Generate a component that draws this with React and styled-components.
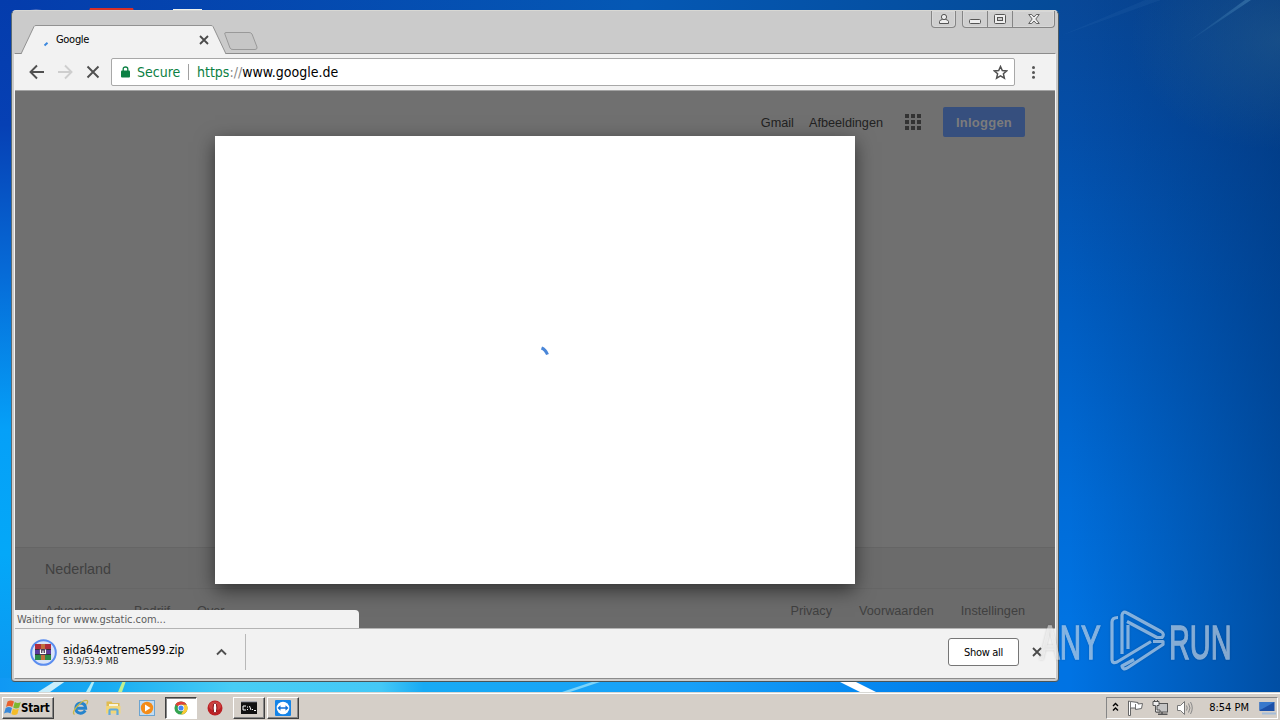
import React from "react";
import styled, { createGlobalStyle, css } from "styled-components";

const UI = '"DejaVu Sans Condensed", "DejaVu Sans", sans-serif';

const GlobalStyle = createGlobalStyle`
  * { box-sizing: border-box; }
  body { margin: 0; overflow: hidden; }
  svg { display: block; flex: none; }
`;

const Desktop = styled.div`
  position: relative;
  width: 1280px;
  height: 720px;
  display: flex;
  flex-direction: column;
  overflow: hidden;
  font-family: ${UI};
  font-stretch: condensed;
  background:
    linear-gradient(90deg, rgba(0, 50, 112, 0) 1070px, rgba(0, 47, 110, 0.54) 1280px),
    linear-gradient(180deg, #084898 0, #044ea8 130px, #005cc0 300px, #006cd8 500px, #0073e2 620px, #0073e4 720px);
`;

const Wallpaper = styled.svg`
  position: absolute;
  inset: 0;
`;

const Stage = styled.div`
  position: relative;
  height: 692px;
  padding: 10px 0 0 11px;
`;

const Window = styled.div`
  width: 1048px;
  height: 672px;
  display: flex;
  flex-direction: column;
  background: #cbcbcb;
  border: 1px solid;
  border-color: #d8d8d4 #4c5a62 #4a5558 #5b6c74;
  border-radius: 5px 5px 4px 4px;
`;

const TitleBar = styled.div`
  display: flex;
  align-items: flex-end;
  height: 42px;
  padding-left: 9px;
  position: relative;
`;

const Tab = styled.div`
  position: relative;
  width: 206px;
  height: 29px;
  margin-bottom: -1px;
  display: flex;
  align-items: center;
  padding: 0 18px 0 22px;
  z-index: 1;
`;

const TabShape = styled.svg`
  position: absolute;
  inset: 0;
`;

const TabTitle = styled.span`
  position: relative;
  flex: 1;
  margin-left: 7px;
  font-size: 11px;
  letter-spacing: -0.3px;
  color: #000;
`;

const Over = styled.span`
  position: relative;
  display: flex;
  padding-top: ${(p) => p.$drop || 0}px;
`;

const NewTab = styled.svg`
  margin: 0 0 2px -5px;
`;

const Caption = styled.div`
  display: flex;
  gap: 6px;
  position: absolute;
  right: 3px;
  top: 0;
`;

const CaptionGroup = styled.div`
  display: flex;
  height: 17px;
  border: 1px solid #858585;
  border-top: 0;
  border-radius: 0 0 4px 4px;
  background: #cfcfcf;
  box-shadow: inset 0 0 0 1px #d8d8d8;
`;

const CaptionButton = styled.div`
  width: ${(p) => p.$w}px;
  display: flex;
  align-items: center;
  justify-content: center;
  & + & { border-left: 1px solid #858585; }
`;

const Client = styled.div`
  margin: 0 2px 0 2px;
  flex: none;
  height: 626px;
  display: flex;
  flex-direction: column;
  background: #f2f2f2;
  border: 1px solid #8c8c8c;
  border-left-color: #f4f4f4;
  border-right-color: #f4f4f4;
`;

const Toolbar = styled.div`
  height: 37px;
  flex: none;
  display: flex;
  align-items: center;
  padding: 0 0 0 14px;
  border-bottom: 1px solid #a3a3a3;
  gap: 12px;
`;

const Omnibox = styled.div`
  width: 904px;
  height: 28px;
  margin-left: -2px;
  border: 1px solid #a8a8a8;
  border-radius: 2px;
  background: #fff;
  display: flex;
  align-items: center;
  padding: 0 6px 0 9px;
  font-size: 14px;
  color: #000;
`;

const Secure = styled.span`
  margin-left: 7px;
  border-right: 1px solid #a0a0a0;
  height: 16px;
  line-height: 17px;
  color: #0b8043;
  width: 52px;
  white-space: nowrap;
`;

const Url = styled.span`
  flex: 1;
  margin-left: 8px;
  i { font-style: normal; color: #0b8043; }
  b { font-weight: normal; color: #888; }
`;

const Page = styled.div`
  height: 537px;
  flex: none;
  position: relative;
  background: #707070;
  display: flex;
  flex-direction: column;
  justify-content: space-between;
  font-family: "Liberation Sans", Arial, sans-serif;
  font-size: 13px;
  overflow: hidden;
`;

const PageNav = styled.div`
  display: flex;
  align-items: center;
  justify-content: flex-end;
  height: 62px;
  padding-right: 30px;
  color: #222;
`;

const NavLink = styled.span`
  margin-right: ${(p) => p.$gap || 15}px;
  padding-top: 2px;
  font-size: 12.7px;
`;

const SignIn = styled.div`
  margin-left: 22px;
  width: 82px;
  height: 30px;
  border-radius: 2px;
  background: #364f7e;
  color: #7c7c7c;
  font-weight: bold;
  letter-spacing: 0.25px;
  text-align: center;
  line-height: 31px;
`;

const PageFooter = styled.div`
  height: 81px;
  background: #6b6b6b;
  border-top: 1px solid #656565;
  color: #404040;
`;

const Country = styled.div`
  height: 41px;
  padding: 0 30px;
  line-height: 43px;
  font-size: 14.3px;
  border-bottom: 1px solid #666;
`;

const FooterLinks = styled.div`
  display: flex;
  justify-content: space-between;
  padding: 15px 30px 0;
  line-height: 15px;
  font-size: 12.7px;
`;

const LinkGroup = styled.div`
  display: flex;
  gap: 27px;
`;

const Modal = styled.div`
  position: absolute;
  left: 200px;
  top: 45px;
  width: 640px;
  height: 448px;
  background: #fff;
  box-shadow: 0 6px 18px rgba(0, 0, 0, 0.55);
  display: flex;
  align-items: center;
  justify-content: center;
  padding: 0 0 17px 20px;
`;

const StatusBubble = styled.div`
  position: absolute;
  left: -1px;
  bottom: 0;
  width: 345px;
  height: 18px;
  background: #f2f2f2;
  border-radius: 0 4px 0 0;
  padding-left: 3px;
  font-family: ${UI};
  font-stretch: condensed;
  font-size: 11px;
  letter-spacing: -0.06px;
  line-height: 19px;
  color: #5c5c5c;
`;

const Shelf = styled.div`
  flex: 1;
  border-top: 1px solid #b4b4b4;
  display: flex;
  align-items: center;
  padding: 0 13px 3px 15px;
`;

const DownloadItem = styled.div`
  width: 216px;
  height: 36px;
  border-right: 1px solid #b8b8b8;
  display: flex;
  align-items: center;
  padding-right: 18px;
`;

const FileText = styled.div`
  flex: 1;
  margin-left: 6px;
  padding-top: 5px;
  font-size: 12px;
  line-height: 13px;
  color: #000;
`;

const FileSize = styled.div`
  font-size: 9px;
  line-height: 8px;
  letter-spacing: 0.15px;
  color: #222;
`;

const ShowAll = styled.div`
  margin-left: auto;
  margin-right: 13px;
  width: 71px;
  height: 28px;
  border: 1px solid #767676;
  border-radius: 3px;
  background: #fff;
  font-size: 11px;
  letter-spacing: -0.3px;
  line-height: 27px;
  text-align: center;
`;

const Watermark = styled.svg`
  position: absolute;
  left: 1036px;
  top: 606px;
  filter: drop-shadow(0 0 1px rgba(0, 0, 0, 0.3));
`;

const Taskbar = styled.div`
  position: relative;
  height: 28px;
  background: #d5cfc8;
  border-top: 1px solid #d8d8d4;
  box-shadow: inset 0 1px 0 #fff;
  display: flex;
  align-items: center;
  padding: 2px 2px 0 2px;
`;

const raised = css`
  border: 1px solid;
  border-color: #fff #404040 #404040 #fff;
  box-shadow: inset -1px -1px 0 #868686;
`;

const StartButton = styled.div`
  ${raised}
  width: 52px;
  height: 22px;
  display: flex;
  align-items: center;
  padding-left: 1px;
  font-size: 11.5px;
  font-weight: bold;
  letter-spacing: -0.2px;
  line-height: 20px;
  margin-right: 10px;
`;

const TaskButton = styled.div`
  width: ${(p) => p.$w || 33}px;
  height: 22px;
  margin-left: ${(p) => p.$gap || 0}px;
  display: flex;
  align-items: center;
  justify-content: center;
  ${(p) => p.$kind === "raised" && raised}
  ${(p) => p.$kind === "active" && css`
    background: #fff;
    border: 1px solid;
    border-color: #404040 #fff #fff #404040;
    box-shadow: inset 1px 1px 0 #868686;
  `}
`;

const Tray = styled.div`
  margin-left: auto;
  width: 172px;
  height: 22px;
  border: 1px solid;
  border-color: #868686 #fff #fff #868686;
  display: flex;
  align-items: center;
  padding: 0 1px 0 4px;
  font-size: 11px;
`;

const TrayIcons = styled.div`
  display: flex;
  align-items: center;
  gap: 7.4px;
`;

const Clock = styled.span`
  margin-left: 16px;
  flex: 1;
  white-space: nowrap;
`;

const CloseX = ({ size = 10, w = 1.8, c = "#4a4a4a" }) => (
  <svg width={size} height={size} viewBox="0 0 10 10" stroke={c} strokeWidth={w}>
    <path d="M1 1l8 8M9 1L1 9" />
  </svg>
);

function WallpaperArt() {
  return (
    <Wallpaper width="1280" height="720" viewBox="0 0 1280 720">
      <defs>
        <linearGradient id="lft" x2="0" y2="1">
          <stop offset="0" stopColor="#043cac" />
          <stop offset=".18" stopColor="#0640b4" />
          <stop offset=".4" stopColor="#066cd8" />
          <stop offset=".62" stopColor="#05a0f8" />
          <stop offset=".8" stopColor="#04a8f8" />
          <stop offset="1" stopColor="#0d96f0" />
        </linearGradient>
        <linearGradient id="top">
          <stop offset="0" stopColor="#043cac" />
          <stop offset=".6" stopColor="#0558b4" />
          <stop offset="1" stopColor="#054b98" />
        </linearGradient>
        <linearGradient id="bot">
          <stop offset="0" stopColor="#1098f4" />
          <stop offset=".1" stopColor="#18acf2" />
          <stop offset=".22" stopColor="#48cdf5" />
          <stop offset=".36" stopColor="#44c8f6" />
          <stop offset=".4" stopColor="#18aaf4" />
          <stop offset=".65" stopColor="#18a0f8" />
          <stop offset=".82" stopColor="#0588f0" />
          <stop offset="1" stopColor="#0073e3" />
        </linearGradient>
        <radialGradient id="glow">
          <stop offset="0" stopColor="#3c7090" stopOpacity=".34" />
          <stop offset="1" stopColor="#3c7090" stopOpacity="0" />
        </radialGradient>
        <linearGradient id="ray" x2="1" y2="0">
          <stop offset="0" stopColor="#5b9cc8" stopOpacity="0" />
          <stop offset="1" stopColor="#5b9cc8" stopOpacity=".4" />
        </linearGradient>
        <filter id="soft"><feGaussianBlur stdDeviation=".7" /></filter>
      </defs>
      <rect width="1060" height="14" fill="url(#top)" />
      <rect width="20" height="692" fill="url(#lft)" />
      <rect y="678" width="1059" height="14" fill="url(#bot)" />
      <ellipse cx="1280" cy="40" rx="150" ry="110" fill="url(#glow)" />
      <path d="M1182 46L1245 0h6z" fill="url(#ray)" />
      <path d="M1060 36l85-36h16z" fill="#4b8cc8" opacity=".1" />
      <g filter="url(#soft)">
        <path d="M38 692l22-14h10l-20 14z" fill="#c9eefb" />
        <path d="M86 692l8-14h2l-6 14z" fill="#b0ecf8" />
        <path d="M118 692l6-14h3l-5 14z" fill="#c0f090" />
        <path d="M562 692l42-14h8l-42 14z" fill="#7cd4fa" />
        <path d="M832 678l30 15h16l-30-15z" fill="#fff" />
      </g>
      <path d="M24 11q12-3 24 0z" fill="#8090cc" />
      <path d="M90 8h43l1 3H89z" fill="#d83028" />
      <path d="M173 9h29v3h-29z" fill="#eef2ee" />
    </Wallpaper>
  );
}

function AnyRunMark() {
  return (
    <Watermark width="200" height="70" viewBox="0 0 200 70">
      <g opacity=".52">
        <g fill="#fff" stroke="#fff" strokeWidth="1.3" fontFamily='"Liberation Sans Narrow", "Liberation Sans", sans-serif' fontSize="48">
          <text transform="translate(4 53) scale(.62 1)" textLength="98" lengthAdjust="spacingAndGlyphs">ANY</text>
          <text transform="translate(133 53) scale(.62 1)" textLength="101" lengthAdjust="spacingAndGlyphs">RUN</text>
        </g>
        <g fill="none" stroke="#fff" strokeWidth="3.2" strokeLinejoin="round">
          <path d="M82 11.500Q76 11.500 76 16V54Q76.500 58 81 56L115 35.500" />
          <path d="M86 48V9Q87 4.500 91 7L125 25.500Q129 28 126 31.500L121 31.500 91 15.500" />
          <path d="M92 19V43" />
          <path d="M117 35.500H127V38.500L92 61.500Q87 65 86 60L98 53.500" />
        </g>
      </g>
    </Watermark>
  );
}

export default function App() {
  return (
    <Desktop>
      <GlobalStyle />
      <WallpaperArt />
      <Stage>
        <Window>
          <TitleBar>
            <Tab>
              <TabShape width="206" height="29" viewBox="0 0 206 29">
                <path d="M0 29L13 1.500Q13.500 .5 15 .5H190Q191.500 .5 192 1.500L205 29" fill="#f2f2f2" stroke="#929292" />
              </TabShape>
              <Over $drop={8}>
                <svg width="6" height="6" viewBox="0 0 6 6"><path d="M1.500 4.500L4.500 1.700" fill="none" stroke="#3a87df" strokeWidth="1.900" /></svg>
              </Over>
              <TabTitle>Google</TabTitle>
              <Over $drop={1}><CloseX /></Over>
            </Tab>
            <NewTab width="36" height="20" viewBox="0 0 36 20">
              <path d="M3 3.500Q2 1.500 4 1.500H27Q29 1.500 30 3L35 16Q35.500 18.500 33 18.500H11Q8.500 18.500 8 17z" fill="#c6c6c6" stroke="#999" />
            </NewTab>
            <Caption>
              <CaptionGroup>
                <CaptionButton $w={23}>
                  <svg width="12" height="12" viewBox="0 0 12 12" fill="#eee" stroke="#555"><path d="M1.500 10.500V8.500Q2 6.500 4.500 6.500h3Q10 6.500 10.500 8.500v2z" /><circle cx="6" cy="4" r="2.600" /></svg>
                </CaptionButton>
              </CaptionGroup>
              <CaptionGroup>
                <CaptionButton $w={24}>
                  <svg width="12" height="12" viewBox="0 0 12 12"><rect x=".5" y="6.500" width="11" height="4" rx="1" fill="#eee" stroke="#555" /></svg>
                </CaptionButton>
                <CaptionButton $w={25}>
                  <svg width="12" height="10" viewBox="0 0 12 10" fill="#eee" stroke="#555"><rect x=".5" y=".5" width="11" height="9" rx="1" /><rect x="3.500" y="3.500" width="5" height="3" fill="#ccc" /></svg>
                </CaptionButton>
                <CaptionButton $w={42}>
                  <svg width="12" height="10" viewBox="0 0 12 10"><path d="M.7.5h3L6 3 8.300.5h3L7.800 5l3.500 4.500h-3L6 7 3.700 9.500h-3L4.200 5z" fill="#eee" stroke="#555" strokeWidth=".9" /></svg>
                </CaptionButton>
              </CaptionGroup>
            </Caption>
          </TitleBar>
          <Client>
            <Toolbar>
              <svg width="16" height="16" viewBox="0 0 16 16" fill="none" stroke="#505050" strokeWidth="1.900"><path d="M15 8H2M8 1.500L1.500 8 8 14.500" /></svg>
              <svg width="16" height="16" viewBox="0 0 16 16" fill="none" stroke="#cecece" strokeWidth="1.900"><path d="M1 8h13M8 1.500L14.500 8 8 14.500" /></svg>
              <svg width="16" height="16" viewBox="0 0 16 16" stroke="#505050" strokeWidth="1.900"><path d="M2.500 2.500l11 11M13.500 2.500l-11 11" /></svg>
              <Omnibox>
                <svg width="9" height="12" viewBox="0 0 9 12"><rect y="4.500" width="9" height="7" rx="1" fill="#0b8043" /><path d="M2.200 5V3Q2.200 1 4.500 1T6.800 3v2" fill="none" stroke="#0b8043" strokeWidth="1.300" /></svg>
                <Secure>Secure</Secure>
                <Url><i>https</i><b>://</b>www.google.de</Url>
                <svg width="15" height="15" viewBox="0 0 15 15"><path d="M7.500 1.500l1.800 4 4.400.4-3.300 2.900 1 4.300-3.900-2.300-3.900 2.300 1-4.300L1.300 5.900l4.400-.4z" fill="none" stroke="#505050" strokeWidth="1.500" /></svg>
              </Omnibox>
              <svg width="12" height="14" viewBox="0 0 12 14" fill="#555"><circle cx="6.500" cy="2.500" r="1.500" /><circle cx="6.500" cy="7.500" r="1.500" /><circle cx="6.500" cy="12.300" r="1.500" /></svg>
            </Toolbar>
            <Page>
              <PageNav>
                <NavLink>Gmail</NavLink>
                <NavLink $gap={22}>Afbeeldingen</NavLink>
                <svg width="16" height="16" viewBox="0 0 16 16" fill="#333">
                  {[0, 6, 12].map((y) => [0, 6, 12].map((x) => <rect key={x + "-" + y} x={x} y={y} width="4" height="4" />))}
                </svg>
                <SignIn>Inloggen</SignIn>
              </PageNav>
              <PageFooter>
                <Country>Nederland</Country>
                <FooterLinks>
                  <LinkGroup><span>Adverteren</span><span>Bedrijf</span><span>Over</span></LinkGroup>
                  <LinkGroup><span>Privacy</span><span>Voorwaarden</span><span>Instellingen</span></LinkGroup>
                </FooterLinks>
              </PageFooter>
              <Modal>
                <svg width="12" height="12" viewBox="0 0 12 12"><path d="M2.500 2Q6.500 3.500 8.500 8.500" fill="none" stroke="#4a86d8" strokeWidth="3" /></svg>
              </Modal>
              <StatusBubble>Waiting for www.gstatic.com...</StatusBubble>
            </Page>
            <Shelf>
              <DownloadItem>
                <svg width="27" height="27" viewBox="0 0 27 27">
                  <circle cx="13.500" cy="13.500" r="12.300" fill="#d9e4f8" stroke="#5b8def" strokeWidth="2" />
                  <rect x="5" y="5" width="16" height="5.500" fill="#b02c3c" />
                  <rect x="5" y="10.500" width="16" height="5" fill="#5a3aa0" />
                  <rect x="5" y="15.500" width="16" height="5.500" fill="#2c8a48" />
                  <path d="M5 10.500h16M5 15.500h16" stroke="#222" strokeWidth=".8" />
                  <rect x="11" y="5" width="4" height="16" fill="#c0703c" />
                  <rect x="9.500" y="10" width="7" height="6" fill="#4a3a58" />
                  <path d="M10.500 10.500v4h5v-4M13 11.500v3" fill="none" stroke="#fff" strokeWidth="1.200" />
                </svg>
                <FileText>aida64extreme599.zip<FileSize>53.9/53.9 MB</FileSize></FileText>
                <svg width="11" height="8" viewBox="0 0 11 8"><path d="M1 6.500L5.500 2 10 6.500" fill="none" stroke="#505050" strokeWidth="1.900" /></svg>
              </DownloadItem>
              <ShowAll>Show all</ShowAll>
              <CloseX />
            </Shelf>
          </Client>
        </Window>
      </Stage>
      <AnyRunMark />
      <Taskbar>
        <StartButton>
          <svg width="17" height="17" viewBox="0 0 17 17">
            <path d="M3.500 2.500q3-2 6.500 0L8.300 8Q5 6 2 8z" fill="#e8602c" />
            <path d="M10.800 3q3 2 6 0L15.200 8.500q-3 2-6 0z" fill="#7cb830" />
            <path d="M1.700 9q3-2 6.300 0L6.500 14.500Q3.500 12.500 0 14.500z" fill="#3888d8" />
            <path d="M8.900 9.500q3 2 6 0L13.400 15q-3 2-6 0z" fill="#f4bc28" />
          </svg>
          Start
        </StartButton>
        <TaskButton>
          <svg width="17" height="17" viewBox="0 0 17 17">
            <path d="M13.300 11.500Q11.500 14.300 8.500 14.300 3.800 13.500 3.800 9.200t5-5.200q4.700.5 4.900 5.300H5" fill="none" stroke="#2684cc" strokeWidth="2.900" />
            <path d="M2.500 15.500Q-.5 13.500 5.500 7T15 1.500q1.500 1-.5 4" fill="none" stroke="#c8b848" strokeWidth="1.300" />
          </svg>
        </TaskButton>
        <TaskButton>
          <svg width="17" height="17" viewBox="0 0 17 17">
            <path d="M1.500 2.500h5l1 1.500h7v10h-13z" fill="#e0bc50" />
            <path d="M4 5h9v3H4z" fill="#f8f4dc" /><path d="M1 7h14.500v7.500H1z" fill="#f2d678" />
            <path d="M4.500 16v-4.500q0-1 1-1h6q1 0 1 1V16" fill="none" stroke="#60aadc" strokeWidth="2.200" />
          </svg>
        </TaskButton>
        <TaskButton>
          <svg width="16" height="16" viewBox="0 0 16 16">
            <rect x=".5" y=".5" width="15" height="15" fill="#c2dcf2" stroke="#6ca4d0" /><circle cx="8" cy="8" r="6.200" fill="#f48c18" /><path d="M6 4.500v7L11.500 8z" fill="#fff" />
          </svg>
        </TaskButton>
        <TaskButton $kind="active" $w={32} $gap={2}>
          <svg width="14" height="14" viewBox="0 0 16 16">
            <circle cx="8" cy="8" r="7.500" fill="#34a350" />
            <path d="M8 8L1.500 4.250A7.500 7.500 0 0 1 14.500 4.250H8z" fill="#e04038" />
            <path d="M14.500 4.250A7.500 7.500 0 0 1 8 15.500L11.200 9.800 8 4.250z" fill="#fcc934" />
            <circle cx="8" cy="8" r="3.700" fill="#fff" /><circle cx="8" cy="8" r="2.900" fill="#4285f4" />
          </svg>
        </TaskButton>
        <TaskButton $w={36}>
          <svg width="16" height="16" viewBox="0 0 16 16"><circle cx="8" cy="8" r="7.500" fill="#bc2024" /><ellipse cx="8" cy="6" rx="6" ry="4.500" fill="#d85850" opacity=".6" /><ellipse cx="8" cy="8" rx="1.900" ry="5.200" fill="#fff" stroke="#801014" /></svg>
        </TaskButton>
        <TaskButton $kind="raised" $w={32}>
          <svg width="16" height="13" viewBox="0 0 16 13"><rect width="16" height="13" fill="#111" /><path d="M0 .5h16" stroke="#a8a8b0" strokeWidth="1.500" /><path d="M5 5H2v4h3M6.500 5.500v1M6.500 8v1M8.500 5l1.500 4M11.500 8v1M13 9.500h2" fill="none" stroke="#fff" /></svg>
        </TaskButton>
        <TaskButton $kind="raised" $w={32} $gap={2}>
          <svg width="16" height="16" viewBox="0 0 16 16"><rect width="16" height="16" rx="1" fill="#1484e8" /><circle cx="8" cy="8" r="6.300" fill="#fff" /><path d="M2.500 8L5.500 5.200v2h5v-2L13.500 8l-3 2.800v-2h-5v2z" fill="#1070d8" /></svg>
        </TaskButton>
        <Tray>
          <TrayIcons>
            <svg width="9" height="12" viewBox="0 0 9 12" fill="none" stroke="#000" strokeWidth="1.400"><path d="M2 4l2.500-2.500L7 4M2 8.500L4.500 6 7 8.500" /></svg>
            <svg width="17" height="16" viewBox="0 0 17 16"><path d="M1.500 1v14.500h2V8h5v1.500l6-1 1-5-4.500.5V2.500L3.500 1.500z" fill="#fff" stroke="#666" /><path d="M3.500 1.500V8M8.500 8V4" stroke="#777" /></svg>
            <svg width="17" height="16" viewBox="0 0 17 16"><rect x="4.500" y="3.500" width="11" height="8.500" fill="#c4c4c4" stroke="#555" /><path d="M6 14.300h9.500M10 12v2" stroke="#555" strokeWidth="1.500" /><path d="M1 1.500h6v4H5v4.500h3v2H3.500V5.500H1zM2.500 1.500V0M5.500 1.500V0" fill="#eee" stroke="#555" /></svg>
            <svg width="17" height="16" viewBox="0 0 17 16"><path d="M1.500 5.500h3l4-4v13l-4-4h-3z" fill="#fff" stroke="#777" /><path d="M10.500 5.500q1.500 2.500 0 5M12.500 3.500q3 4.500 0 9M14.500 2q3.500 6 0 12" fill="none" stroke="#888" /></svg>
          </TrayIcons>
          <Clock>8:54 PM</Clock>
          <svg width="17" height="14" viewBox="0 0 17 14"><path d="M.5 1h15v9H.5z" fill="#1c50a8" /><path d="M.5 1h15L3 8 .5 9z" fill="#3878cc" /><path d="M3 11.500h14v2H3z" fill="#a4bcd8" /></svg>
        </Tray>
      </Taskbar>
    </Desktop>
  );
}
